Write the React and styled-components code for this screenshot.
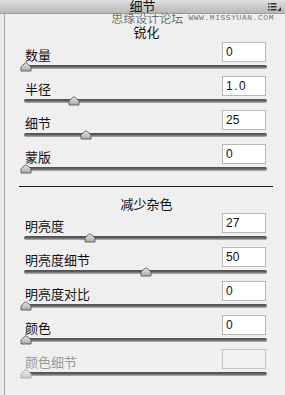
import React from "react";
import styled, { createGlobalStyle } from "styled-components";

const Global = createGlobalStyle`
  html, body { margin: 0; padding: 0; background: #ebebeb; }
  #root { width: 285px; height: 395px; }
`;

const Page = styled.div`
  position: relative;
  width: 285px;
  height: 395px;
  overflow: hidden;
  display: flex;
  flex-direction: column;
  background: #ebebeb;
  font-family: "Noto Sans CJK SC", "Noto Sans", sans-serif;
  color: #111;
`;

const Header = styled.div`
  position: relative;
  height: 13px;
  flex: none;
  background: linear-gradient(#e2e2e2, #cfcfcf 40%, #b9b9b9);
  border-bottom: 1px solid #9c9c9c;
  text-align: center;
  font-size: 13px;
  line-height: 11px;
  overflow: hidden;
`;

const MenuIcon = styled.svg`
  position: absolute;
  right: 4px;
  top: 3px;
`;

const Watermark = styled.div`
  position: absolute;
  right: 11px;
  top: 10px;
  display: flex;
  align-items: center;
  gap: 5px;
  white-space: nowrap;
  color: #6e6e6e;
  pointer-events: none;
  text-shadow: 0 0 1px #fff;
`;

const WmCn = styled.span`
  font-family: "Noto Sans CJK SC", sans-serif;
  font-size: 12px;
  line-height: 14px;
`;

const WmEn = styled.span`
  font-family: "Liberation Mono", "Courier New", monospace;
  font-size: 8px;
  letter-spacing: 0.55px;
  line-height: 14px;
  padding-top: 1px;
`;

const Body = styled.div`
  flex: 1;
  margin-left: 4px;
  border-left: 1px solid #a6a6a6;
  background: #efefef;
  display: flex;
  flex-direction: column;
  padding: 0 18px 0 19px;
`;

const SectionTitle = styled.div`
  margin-top: ${(p) => p.$top}px;
  height: 16px;
  line-height: 16px;
  font-size: 13px;
  text-align: center;
  padding-left: 2px;
`;

const Rows = styled.div`
  margin-top: ${(p) => p.$top}px;
  display: flex;
  flex-direction: column;
`;

const Row = styled.div`
  display: grid;
  grid-template-columns: 1fr 44px;
  grid-template-rows: 20px 14px;
  column-gap: 4px;
  margin-right: 1px;
`;

const Label = styled.div`
  grid-column: 1;
  grid-row: 1;
  font-size: 13px;
  line-height: 20px;
  padding: 3px 0 0 1px;
  box-sizing: border-box;
  color: ${(p) => (p.$disabled ? "#9a9a9a" : "#111")};
`;

const Input = styled.div`
  grid-column: 2;
  grid-row: 1;
  box-sizing: border-box;
  height: 20px;
  border: 1px solid ${(p) => (p.$disabled ? "#c4c4c4" : "#b8b8b8")};
  background: ${(p) => (p.$disabled ? "#f1f1f1" : "#ffffff")};
  font-family: "Liberation Sans", Arial, sans-serif;
  font-size: 12px;
  line-height: 18px;
  padding-left: 3px;
  color: #111;
  letter-spacing: ${(p) => (p.$wide ? "1.5px" : "0")};
`;

const Slider = styled.div`
  grid-column: 1 / span 2;
  grid-row: 2;
  position: relative;
  margin-right: -1px;
`;

const Track = styled.div`
  margin-top: 3px;
  height: 4px;
  border-radius: 2px;
  background: linear-gradient(#4e4e4e, #5e5e5e 45%, #8e8e8e 75%, #b8b8b8);
`;

const Thumb = styled.svg`
  position: absolute;
  top: 0;
`;

const Divider = styled.div`
  margin: 8px -6px 0 -5px;
  height: 1px;
  background: #1a1a1a;
`;

function ThumbShape({ left, disabled }) {
  const id = disabled ? "thd" : "th";
  return (
    <Thumb width="12" height="10" viewBox="0 0 12 10" style={{ left }}>
      <defs>
        <linearGradient id={id} x1="0" y1="0" x2="0" y2="1">
          <stop offset="0" stopColor={disabled ? "#eeeeee" : "#e6e6e6"} />
          <stop offset="1" stopColor={disabled ? "#c8c8c8" : "#a9a9a9"} />
        </linearGradient>
      </defs>
      <path
        d="M1 9 L1 5.5 Q1 4.6 1.8 4 L5.2 1.2 Q6 0.6 6.8 1.2 L10.2 4 Q11 4.6 11 5.5 L11 9 Z"
        fill={`url(#${id})`}
        stroke={disabled ? "#a8a8a8" : "#5a5a5a"}
        strokeWidth="0.9"
        strokeLinejoin="round"
      />
    </Thumb>
  );
}

function SliderRow({ label, value, frac, disabled, wide }) {
  const left = frac * 240 - 4.5;
  return (
    <Row>
      <Label $disabled={disabled}>{label}</Label>
      <Input $disabled={disabled} $wide={wide}>{value}</Input>
      <Slider>
        <Track />
        <ThumbShape left={left} disabled={disabled} />
      </Slider>
    </Row>
  );
}

const sharpen = [
  { label: "数量", value: "0", frac: 0 },
  { label: "半径", value: "1.0", frac: 0.2, wide: true },
  { label: "细节", value: "25", frac: 0.25 },
  { label: "蒙版", value: "0", frac: 0 },
];

const noise = [
  { label: "明亮度", value: "27", frac: 0.27 },
  { label: "明亮度细节", value: "50", frac: 0.5 },
  { label: "明亮度对比", value: "0", frac: 0 },
  { label: "颜色", value: "0", frac: 0 },
  { label: "颜色细节", value: "", frac: 0, disabled: true },
];

export default function App() {
  return (
    <>
      <Global />
      <Page>
        <Header>
          细节
          <MenuIcon width="13" height="8" viewBox="0 0 13 8">
            <g fill="#333">
              <rect x="0" y="0" width="1.5" height="1.5" />
              <rect x="0" y="3" width="1.5" height="1.5" />
              <rect x="0" y="6" width="1.5" height="1.5" />
              <rect x="2.5" y="0" width="6" height="1.5" />
              <rect x="2.5" y="3" width="6" height="1.5" />
              <rect x="2.5" y="6" width="6" height="1.5" />
              <path d="M13 4 L13 8 L9.5 8 Z" />
            </g>
          </MenuIcon>
        </Header>
        <Watermark>
          <WmCn>思缘设计论坛</WmCn>
          <WmEn>WWW.MISSYUAN.COM</WmEn>
        </Watermark>
        <Body>
          <SectionTitle $top={10}>锐化</SectionTitle>
          <Rows $top={2}>
            {sharpen.map((r) => (
              <SliderRow key={r.label} {...r} />
            ))}
          </Rows>
          <Divider />
          <SectionTitle $top={9}>减少杂色</SectionTitle>
          <Rows $top={1}>
            {noise.map((r) => (
              <SliderRow key={r.label} {...r} />
            ))}
          </Rows>
        </Body>
      </Page>
    </>
  );
}
